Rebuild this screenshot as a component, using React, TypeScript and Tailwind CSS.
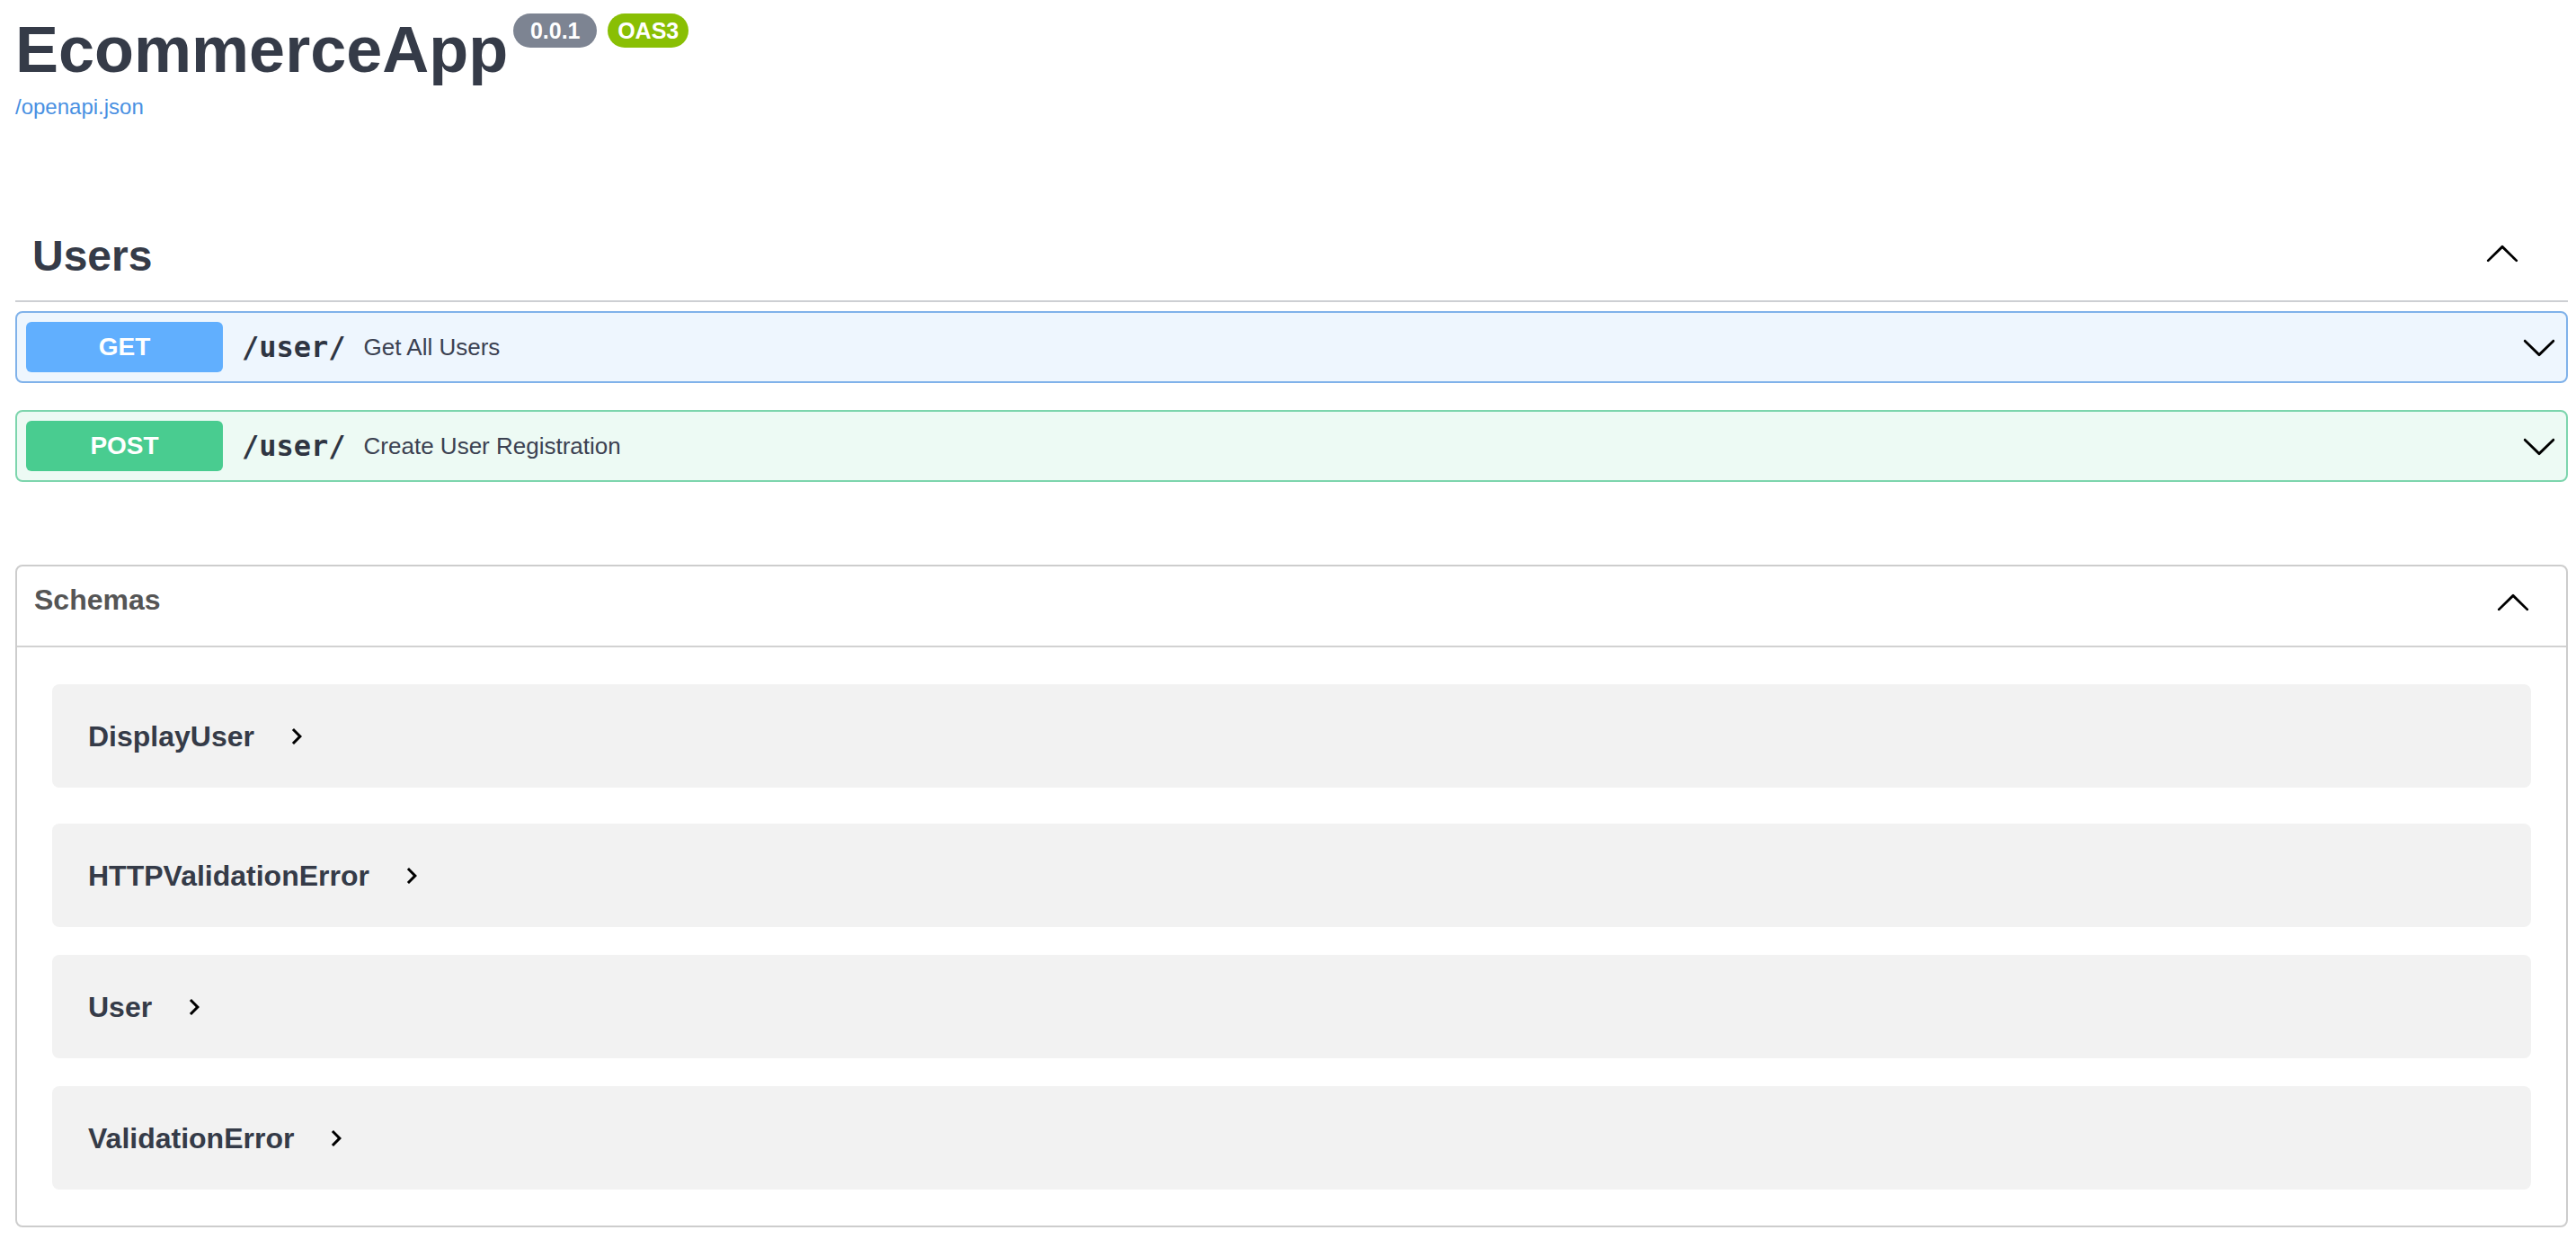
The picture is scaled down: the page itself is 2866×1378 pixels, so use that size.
import React from "react";

const ARROW_UP =
  "M17.418 14.908c.272.268.709.268.979 0 .27-.268.271-.701 0-.969l-7.908-7.83a.697.697 0 0 0-.979 0l-7.908 7.83c-.27.268-.27.701 0 .969.271.268.709.268.979 0L10 7.767l7.418 7.141z";
const ARROW_DOWN =
  "M17.418 6.109c.272-.268.709-.268.979 0s.271.701 0 .969l-7.908 7.83c-.27.268-.707.268-.979 0l-7.908-7.83c-.27-.268-.27-.701 0-.969.271-.268.709-.268.979 0L10 13.25l7.418-7.141z";

function Arrow({ up, className }: { up?: boolean; className?: string }) {
  return (
    <svg viewBox="0 0 20 20" fill="currentColor" className={className}>
      <path d={up ? ARROW_UP : ARROW_DOWN} />
    </svg>
  );
}

function ModelToggle() {
  return (
    <svg viewBox="0 0 24 24" fill="currentColor" className="ml-[29px] h-9 w-9 text-black">
      <path d="M10 6 8.59 7.41 13.17 12l-4.58 4.59L10 18l6-6z" />
    </svg>
  );
}

type Op = {
  method: string;
  path: string;
  summary: string;
  box: string;
  badge: string;
};

const ops: Op[] = [
  {
    method: "GET",
    path: "/user/",
    summary: "Get All Users",
    box: "border-[#80b2ea] bg-[#eef6fe]",
    badge: "bg-[#61affe]",
  },
  {
    method: "POST",
    path: "/user/",
    summary: "Create User Registration",
    box: "border-[#7dd5ad] bg-[#edfaf4]",
    badge: "bg-[#49cc90]",
  },
];

const schemas = [
  { name: "DisplayUser", gap: "" },
  { name: "HTTPValidationError", gap: "mt-[40px]" },
  { name: "User", gap: "mt-[31px]" },
  { name: "ValidationError", gap: "mt-[31px]" },
];

function Operation({ op, first }: { op: Op; first: boolean }) {
  return (
    <div
      className={`${first ? "mt-[10px]" : "mt-[30px]"} flex h-[80px] items-center rounded-[8px] border-2 px-[10px] ${op.box}`}
    >
      <div
        className={`flex h-[56px] w-[219px] items-center justify-center rounded-[6px] text-[28px] font-bold leading-none text-white ${op.badge}`}
      >
        {op.method}
      </div>
      <span className="ml-[21px] font-['DejaVu_Sans_Mono',monospace] text-[32px] font-semibold leading-none text-[#2f3542]">
        {op.path}
      </span>
      <span className="ml-[20px] text-[26px] leading-none text-[#3b4151]">{op.summary}</span>
      <Arrow className="ml-auto h-10 w-10 text-black" />
    </div>
  );
}

export default function App() {
  return (
    <div className="min-h-screen bg-white font-['Liberation_Sans',Arial,sans-serif] text-[#353b48]">
      <div className="pb-[15px] pl-[17px] pr-[9px] pt-[15px]">
        {/* info block */}
        <div className="flex items-start">
          <h2 className="mt-[4px] text-[72px] font-bold leading-none">EcommerceApp</h2>
          <div className="ml-[6px] flex gap-[12px]">
            <span className="flex h-[38px] w-[93px] items-center justify-center rounded-full bg-[#7d8492] text-[25px] font-bold leading-none text-white">
              0.0.1
            </span>
            <span className="flex h-[38px] w-[90px] items-center justify-center rounded-full bg-[#89bf04] text-[25px] font-bold leading-none text-white">
              OAS3
            </span>
          </div>
        </div>
        <a className="mt-[16px] block text-[24px] leading-none text-[#4990e2]">/openapi.json</a>

        {/* tag: Users */}
        <div className="mt-[130px] flex items-start justify-between border-b-2 border-[#cdcfd3] pb-[25px] pl-[19px] pr-[53px]">
          <h3 className="text-[48px] font-bold leading-none">Users</h3>
          <Arrow up className="h-10 w-10 text-black" />
        </div>
        {ops.map((op, i) => (
          <Operation key={op.method} op={op} first={i === 0} />
        ))}

        {/* schemas */}
        <section className="mt-[92px] rounded-[8px] border-2 border-[#cdcdcd]">
          <div className="flex h-[90px] items-start justify-between border-b-2 border-[#d2d2d2] pl-[19px] pr-[39px] pt-[21px]">
            <h4 className="text-[32px] font-bold leading-none text-[#555555]">Schemas</h4>
            <Arrow up className="-mt-[2px] h-10 w-10 text-black" />
          </div>
          <div className="flex flex-col px-[39px] pb-[40px] pt-[41px]">
            {schemas.map((s) => (
              <div
                key={s.name}
                className={`${s.gap} flex h-[115px] items-center rounded-[8px] bg-[#f2f2f2] pl-[40px]`}
              >
                <span className="text-[32px] font-bold leading-none text-[#353b48]">{s.name}</span>
                <ModelToggle />
              </div>
            ))}
          </div>
        </section>
      </div>
    </div>
  );
}
